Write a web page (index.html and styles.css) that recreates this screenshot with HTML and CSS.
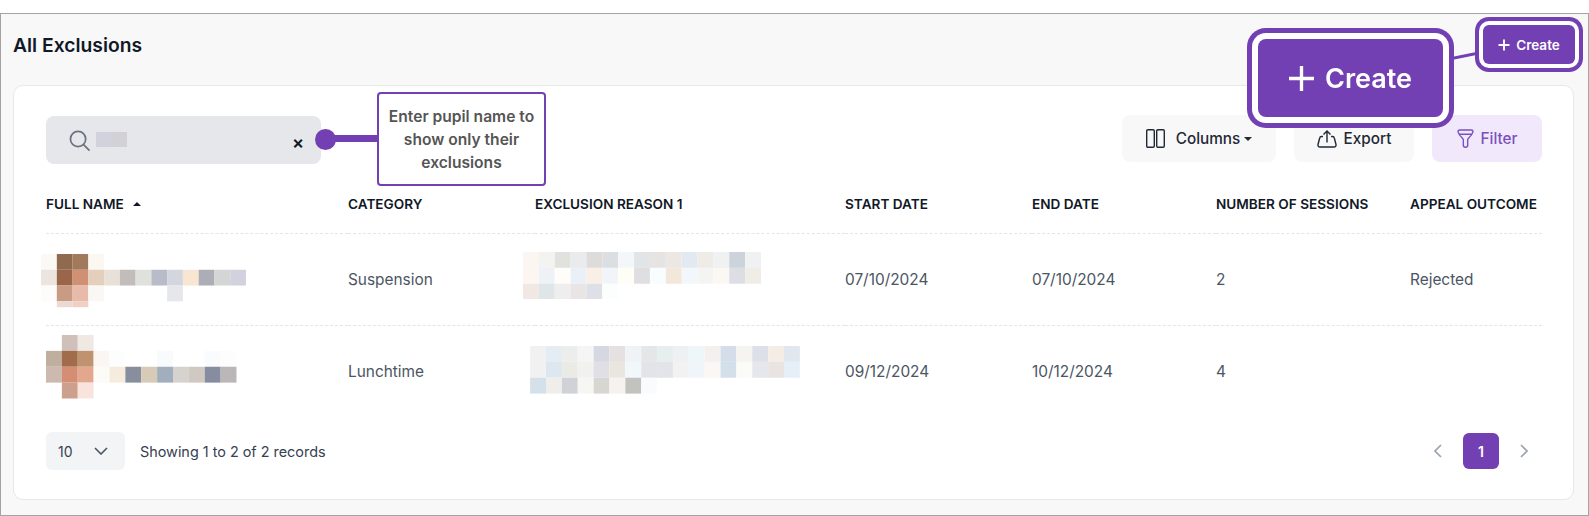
FILE: index.html
```html
<!DOCTYPE html>
<html lang="en">
<head>
<meta charset="utf-8">
<title>All Exclusions</title>
<link rel="stylesheet" href="styles.css">
</head>
<body>
<main class="frame">
  <header class="page-head">
    <h1 class="page-title">All Exclusions</h1>
    <button class="create-btn">
      <svg class="plus-small" viewBox="0 0 12 12"><path d="M6 .5v11M.5 6h11"/></svg>
      Create
    </button>
  </header>

  <section class="card">
    <div class="toolbar">
      <div class="search">
        <svg class="search-icon" viewBox="0 0 22 22"><circle cx="9.500" cy="9.500" r="8"/><path d="M15.500 15.500l5.500 5.500"/></svg>
        <svg class="search-typed" viewBox="0 0 31 15"><rect class="t1" width="16" height="15" fill="#d0d3dc"/><rect class="t2" x="16" width="15" height="15" fill="#d2d2d4"/></svg>
        <span class="search-clear">×</span>
      </div>
      <div class="actions">
        <button class="tool tool-columns">
          <svg class="ic-columns" viewBox="0 0 19 19"><rect x=".7" y=".7" width="7.600" height="17.600" rx="1.200"/><rect x="10.700" y=".7" width="7.600" height="17.600" rx="1.200"/></svg>
          <span>Columns<span class="caret"></span></span>
        </button>
        <button class="tool tool-export">
          <svg class="ic-export" viewBox="0 0 20 18"><path d="M6 6.500H4.500Q3 6.500 2.700 8L1 14.500Q.7 17 3 17h14q2.300 0 2-2.500L17.300 8Q17 6.500 15.500 6.500H14"/><path d="M10 12.500V1M6.500 4.500L10 1l3.500 3.500"/></svg>
          Export
        </button>
        <button class="tool tool-filter">
          <svg class="ic-filter" viewBox="0 0 18 20"><path d="M3 1h12q2.300 0 1.800 2.200-.8 3-4.800 6.800-.7 .7-.7 1.700v5.800q0 1.800-2.300 1.800t-2.300-1.800v-5.800q0-1-.7-1.700Q2 6.200 1.200 3.200.7 1 3 1zM1.500 5.500h15"/></svg>
          Filter
        </button>
      </div>
    </div>

    <table class="grid">
      <colgroup>
        <col class="c-name"><col class="c-cat"><col class="c-reason"><col class="c-start"><col class="c-end"><col class="c-sess"><col class="c-appeal">
      </colgroup>
      <thead>
        <tr>
          <th>Full Name <span class="sort-up"></span></th>
          <th>Category</th>
          <th>Exclusion Reason 1</th>
          <th>Start Date</th>
          <th>End Date</th>
          <th>Number of Sessions</th>
          <th>Appeal Outcome</th>
        </tr>
      </thead>
      <tbody>
        <tr>
          <td>
            <svg class="pix name-a" viewBox="0 0 208 54">
              <rect x="0" y="0" fill="#fbf9f6"/><rect x="16" y="0" fill="#8f6a4f"/><rect x="32" y="0" fill="#a07a5a"/><rect x="48" y="0" fill="#fbf8f2"/>
              <rect x="0" y="16" fill="#ece5df"/><rect x="16" y="16" fill="#9b6549"/><rect x="32" y="16" fill="#cf9074"/><rect x="48" y="16" fill="#e3cfbb"/><rect x="64" y="16" fill="#e9e1d7"/><rect x="80" y="16" fill="#c2bcba"/><rect x="96" y="16" fill="#dfe1dc"/><rect x="112" y="16" fill="#b7bcc8"/><rect x="128" y="16" fill="#d3d6df"/><rect x="144" y="16" fill="#f8e5d2"/><rect x="160" y="16" fill="#adadb8"/><rect x="176" y="16" fill="#d3d6d5"/><rect x="192" y="16" fill="#d2d2df"/>
              <rect x="0" y="32" fill="#fdfcfb"/><rect x="16" y="32" fill="#c99b83"/><rect x="32" y="32" fill="#e8baa9"/><rect x="48" y="32" fill="#faf8f5"/><rect x="128" y="32" fill="#e6e7ec"/>
              <rect class="sliver" x="16" y="48" fill="#ecd9d3"/><rect class="sliver" x="32" y="48" fill="#efd0c2"/>
            </svg>
          </td>
          <td>Suspension</td>
          <td>
            <svg class="pix reason-a" viewBox="0 0 240 48">
              <rect x="0" y="0" fill="#fbf6f1"/><rect x="16" y="0" fill="#f3f3f2"/><rect x="32" y="0" fill="#e1e1de"/><rect x="48" y="0" fill="#e9ebed"/><rect x="64" y="0" fill="#dedcda"/><rect x="80" y="0" fill="#dcdfe1"/><rect x="96" y="0" fill="#f4f7fa"/><rect x="112" y="0" fill="#e2e5e8"/><rect x="128" y="0" fill="#e5e4e3"/><rect x="144" y="0" fill="#ece7e3"/><rect x="160" y="0" fill="#e3e9f1"/><rect x="176" y="0" fill="#efebe6"/><rect x="192" y="0" fill="#eff1f2"/><rect x="208" y="0" fill="#cdd3da"/><rect x="224" y="0" fill="#f0f1f3"/>
              <rect x="0" y="16" fill="#fbf6f1"/><rect x="16" y="16" fill="#eef1f6"/><rect x="32" y="16" fill="#fffdf9"/><rect x="48" y="16" fill="#e9f0f8"/><rect x="64" y="16" fill="#f9efe7"/><rect x="80" y="16" fill="#f1f4f8"/><rect x="96" y="16" fill="#fffef6"/><rect x="112" y="16" fill="#dfdfe2"/><rect x="128" y="16" fill="#f8fdff"/><rect x="144" y="16" fill="#f3e6da"/><rect x="160" y="16" fill="#f2f7fc"/><rect x="176" y="16" fill="#f4f4f3"/><rect x="192" y="16" fill="#fbf8f3"/><rect x="208" y="16" fill="#dcdee4"/><rect x="224" y="16" fill="#f0ede7"/>
              <rect x="0" y="32" fill="#f2e8e3"/><rect x="16" y="32" fill="#dfe6e8"/><rect x="32" y="32" fill="#eeeeef"/><rect x="48" y="32" fill="#eae5e5"/><rect x="64" y="32" fill="#dde0e7"/><rect x="80" y="32" fill="#fcfefe"/>
            </svg>
          </td>
          <td>07/10/2024</td>
          <td>07/10/2024</td>
          <td>2</td>
          <td>Rejected</td>
        </tr>
        <tr>
          <td>
            <svg class="pix name-b" viewBox="0 0 192 64">
              <rect x="16" y="0" fill="#cfc1ba"/><rect x="32" y="0" fill="#f0e8e3"/>
              <rect x="0" y="16" fill="#c0ae9f"/><rect x="16" y="16" fill="#a06c4b"/><rect x="32" y="16" fill="#bf9270"/><rect x="48" y="16" fill="#fbf6f1"/><rect x="64" y="16" fill="#fdfdfd"/><rect x="112" y="16" fill="#f9fafc"/><rect x="160" y="16" fill="#fafbfd"/><rect x="176" y="16" fill="#fdfdfd"/>
              <rect x="0" y="32" fill="#ccb9b0"/><rect x="16" y="32" fill="#d48e73"/><rect x="32" y="32" fill="#e3a78d"/><rect x="48" y="32" fill="#fdfbf8"/><rect x="64" y="32" fill="#f6ecdd"/><rect x="80" y="32" fill="#878e9d"/><rect x="96" y="32" fill="#d7cbb8"/><rect x="112" y="32" fill="#a0aebd"/><rect x="128" y="32" fill="#d6d2cd"/><rect x="144" y="32" fill="#d0c9c2"/><rect x="160" y="32" fill="#868da0"/><rect x="176" y="32" fill="#bbb7b9"/>
              <rect x="16" y="48" fill="#cda08d"/><rect x="32" y="48" fill="#f8e4dc"/>
            </svg>
          </td>
          <td>Lunchtime</td>
          <td>
            <svg class="pix reason-b" viewBox="0 0 272 48">
              <rect x="0" y="0" fill="#f1f1f2"/><rect x="16" y="0" fill="#e4ecf4"/><rect x="32" y="0" fill="#ebeeeb"/><rect x="48" y="0" fill="#f5f5f5"/><rect x="64" y="0" fill="#d6d8e1"/><rect x="80" y="0" fill="#e6e0e1"/><rect x="96" y="0" fill="#f0f3f6"/><rect x="112" y="0" fill="#e4e6e8"/><rect x="128" y="0" fill="#e7eeee"/><rect x="144" y="0" fill="#eff0f2"/><rect x="160" y="0" fill="#eef6fa"/><rect x="176" y="0" fill="#f3f0ee"/><rect x="192" y="0" fill="#d3deea"/><rect x="208" y="0" fill="#f6f4f0"/><rect x="224" y="0" fill="#dde0e9"/><rect x="240" y="0" fill="#f3ede6"/><rect x="256" y="0" fill="#e1e7ee"/>
              <rect x="0" y="16" fill="#f1f1f2"/><rect x="16" y="16" fill="#dde7f0"/><rect x="32" y="16" fill="#ebebe5"/><rect x="48" y="16" fill="#f1f1f0"/><rect x="64" y="16" fill="#dfdfe5"/><rect x="80" y="16" fill="#eae6df"/><rect x="96" y="16" fill="#f2f7fb"/><rect x="112" y="16" fill="#e2e4ea"/><rect x="128" y="16" fill="#e2e4ea"/><rect x="144" y="16" fill="#f3f2f2"/><rect x="160" y="16" fill="#eff5fb"/><rect x="176" y="16" fill="#fbf7f4"/><rect x="192" y="16" fill="#d4dfec"/><rect x="208" y="16" fill="#fbfcf8"/><rect x="224" y="16" fill="#e5e7ed"/><rect x="240" y="16" fill="#e9e3e3"/><rect x="256" y="16" fill="#e6eff8"/>
              <rect x="0" y="32" fill="#d4e0ea"/><rect x="16" y="32" fill="#f0eeea"/><rect x="32" y="32" fill="#d0d2d8"/><rect x="48" y="32" fill="#f6f7f3"/><rect x="64" y="32" fill="#d8d6d1"/><rect x="80" y="32" fill="#f5f2ef"/><rect x="96" y="32" fill="#c2c2bf"/><rect x="112" y="32" fill="#fafbfd"/>
            </svg>
          </td>
          <td>09/12/2024</td>
          <td>10/12/2024</td>
          <td>4</td>
          <td></td>
        </tr>
      </tbody>
    </table>

    <footer class="table-foot">
      <div class="foot-left">
        <div class="page-size">
          <span>10</span>
          <svg class="chev-down" viewBox="0 0 14 8"><path d="M1 1l6 6 6-6"/></svg>
        </div>
        <span class="records">Showing 1 to 2 of 2 records</span>
      </div>
      <nav class="pager">
        <svg class="chev-side" viewBox="0 0 8 14"><path d="M7 1L1 7l6 6"/></svg>
        <span class="page-current">1</span>
        <svg class="chev-side" viewBox="0 0 8 14"><path d="M1 1l6 6-6 6"/></svg>
      </nav>
    </footer>
  </section>

  <div class="callout-dot"></div>
  <div class="callout-line"></div>
  <div class="callout">Enter pupil name to show only their exclusions</div>

  <svg class="zoom-link" viewBox="0 0 30 12"><path d="M0 9L30 3"/></svg>
  <div class="zoomed-create">
    <svg class="plus-big" viewBox="0 0 24 24"><path d="M12 0v24M0 12h24"/></svg>
    <span class="zoomed-label">Create</span>
  </div>
</main>
</body>
</html>
```

FILE: styles.css
```css
* { box-sizing: border-box; }

html, body {
  margin: 0;
  background: #fff;
}

body {
  padding-top: 13px;
  font-family: Inter, "Liberation Sans", sans-serif;
  color: #4b5563;
  overflow: hidden;
}

button {
  font-family: inherit;
  border: 0;
  cursor: pointer;
}

.frame {
  position: relative;
  height: 503px;
  padding: 11px 14px 15px 12px;
  background: #f8f8f8;
  border: 1px solid #a3a3a3;
}

.page-head {
  display: flex;
  align-items: center;
  justify-content: space-between;
  height: 39px;
  margin: 0 -1px 21px 0;
}

.page-title {
  margin: 0;
  font-size: 19.3px;
  font-weight: 600;
  color: #111827;
}

.create-btn {
  display: flex;
  align-items: center;
  justify-content: center;
  gap: 6px;
  width: 92px;
  height: 39px;
  padding: 0;
  font-size: 13.5px;
  font-weight: 600;
  color: #fff;
  background: #7240b3;
  border-radius: 6px;
  box-shadow: 0 0 0 4px #fff, 0 0 0 8px #7240b3;
}

.plus-small {
  width: 12px;
  height: 12px;
  fill: none;
  stroke: #fff;
  stroke-width: 1.9;
}

.card {
  height: 415px;
  padding: 30px 31px 29px 32px;
  background: #fff;
  border: 1px solid #e8e8e8;
  border-radius: 10px;
}

.toolbar {
  display: flex;
  justify-content: space-between;
  align-items: flex-start;
  height: 48px;
  margin-bottom: 12px;
}

.search {
  display: flex;
  align-items: center;
  width: 275px;
  height: 48px;
  padding: 0 17px 0 23px;
  background: #e5e7eb;
  border-radius: 8px;
}

.search-icon {
  width: 21px;
  height: 21px;
  fill: none;
  stroke: #6b7280;
  stroke-width: 1.8;
  stroke-linecap: round;
}

.search-typed {
  width: 31px;
  height: 15px;
  margin: 0 0 2px 6px;
}

.search-clear {
  margin: 6px 0 0 auto;
  font-size: 18px;
  font-weight: 600;
  line-height: 1;
  color: #111827;
}

.actions {
  display: flex;
  gap: 18px;
  margin-top: -1px;
}

.tool {
  display: flex;
  align-items: center;
  justify-content: center;
  height: 47px;
  padding: 0;
  font-size: 15.3px;
  font-weight: 500;
  color: #1f2937;
  background: #f8f8f8;
  border-radius: 8px;
}

.tool-columns { width: 154px; gap: 11px; }
.tool-export { width: 120px; gap: 7px; }
.tool-filter {
  width: 110px;
  gap: 7px;
  color: #7b50c0;
  background: #f1e9fb;
}

.ic-columns {
  width: 19px;
  height: 19px;
  fill: none;
  stroke: #1f2937;
  stroke-width: 1.4;
}

.ic-export {
  width: 20px;
  height: 18px;
  fill: none;
  stroke: #1f2937;
  stroke-width: 1.4;
}

.ic-filter {
  width: 17px;
  height: 19px;
  fill: none;
  stroke: #7b50c0;
  stroke-width: 1.5;
}

.caret {
  display: inline-block;
  width: 0;
  height: 0;
  margin: 0 0 3px 4px;
  border: 4px solid transparent;
  border-top-color: #1f2937;
  border-bottom: 0;
}

.grid {
  width: 100%;
  table-layout: fixed;
  border-collapse: collapse;
}

.c-name { width: 302px; }
.c-cat { width: 187px; }
.c-reason { width: 310px; }
.c-start { width: 187px; }
.c-end { width: 184px; }
.c-sess { width: 194px; }
.c-appeal { width: 132px; }

.grid th {
  height: 57px;
  padding: 0;
  font-size: 13.6px;
  font-weight: 600;
  text-align: left;
  text-transform: uppercase;
  white-space: nowrap;
  color: #111827;
}

.grid td {
  height: 92px;
  padding: 0;
  font-size: 15.4px;
  border-top: 1px dashed #e5e5e5;
}

.sort-up {
  display: inline-block;
  width: 0;
  height: 0;
  margin: 0 0 3px 6px;
  border: 4.500px solid transparent;
  border-bottom-color: #111827;
  border-top: 0;
}

.pix { display: block; }
.pix rect { width: 16px; height: 16px; }
.pix rect.sliver { height: 6px; }

.name-a { width: 205px; height: 53.200px; margin: 4px 0 0 -5px; }
.name-b { width: 190.500px; height: 63.500px; margin-top: -9px; }
.reason-a { width: 238px; height: 47.600px; margin: -7px 0 0 -12px; }
.reason-b { width: 270px; height: 47.600px; margin: -3px 0 0 -5px; }

.table-foot {
  display: flex;
  justify-content: space-between;
  align-items: center;
  height: 38px;
  margin-top: 15px;
}

.foot-left {
  display: flex;
  align-items: center;
  gap: 15px;
}

.page-size {
  display: flex;
  align-items: center;
  justify-content: space-between;
  width: 79px;
  height: 38px;
  padding: 0 17px 0 12px;
  font-size: 14px;
  color: #374151;
  background: #f3f4f6;
  border-radius: 6px;
}

.chev-down {
  width: 14px;
  height: 8px;
  fill: none;
  stroke: #4b5563;
  stroke-width: 1.6;
}

.records {
  font-size: 14.4px;
  color: #374151;
}

.pager {
  display: flex;
  align-items: center;
  gap: 21px;
  margin-right: 14px;
}

.chev-side {
  width: 8px;
  height: 14px;
  fill: none;
  stroke: #9ca3af;
  stroke-width: 1.7;
}

.page-current {
  display: flex;
  align-items: center;
  justify-content: center;
  width: 36px;
  height: 36px;
  font-size: 14px;
  font-weight: 600;
  color: #fff;
  background: #7240b3;
  border-radius: 6px;
}

/* Annotations laid over the page */
.callout {
  position: absolute;
  left: 376px;
  top: 78px;
  display: flex;
  align-items: center;
  width: 169px;
  height: 94px;
  padding: 0 4px;
  font-size: 15.6px;
  font-weight: 600;
  line-height: 23px;
  text-align: center;
  color: #555;
  background: #fff;
  border: 2px solid #7240b3;
  border-radius: 4px;
}

.callout-dot {
  position: absolute;
  left: 314px;
  top: 115px;
  width: 21px;
  height: 21px;
  background: #7240b3;
  border-radius: 50%;
}

.callout-line {
  position: absolute;
  left: 330px;
  top: 121px;
  width: 48px;
  height: 7px;
  background: #7240b3;
}

.zoom-link {
  position: absolute;
  left: 1448px;
  top: 36px;
  width: 30px;
  height: 12px;
  fill: none;
  stroke: #7240b3;
  stroke-width: 3;
}

.zoomed-create {
  position: absolute;
  left: 1257px;
  top: 25px;
  display: flex;
  align-items: center;
  justify-content: center;
  gap: 11px;
  width: 185px;
  height: 78px;
  font-size: 27px;
  font-weight: 600;
  color: #fff;
  background: #7240b3;
  border-radius: 8px;
  box-shadow: 0 0 0 6px #fff, 0 0 0 11px #7240b3;
}

.plus-big {
  width: 25px;
  height: 25px;
  fill: none;
  stroke: #fff;
  stroke-width: 3.200;
  filter: blur(.4px);
}

.zoomed-label { filter: blur(.4px); }
```
